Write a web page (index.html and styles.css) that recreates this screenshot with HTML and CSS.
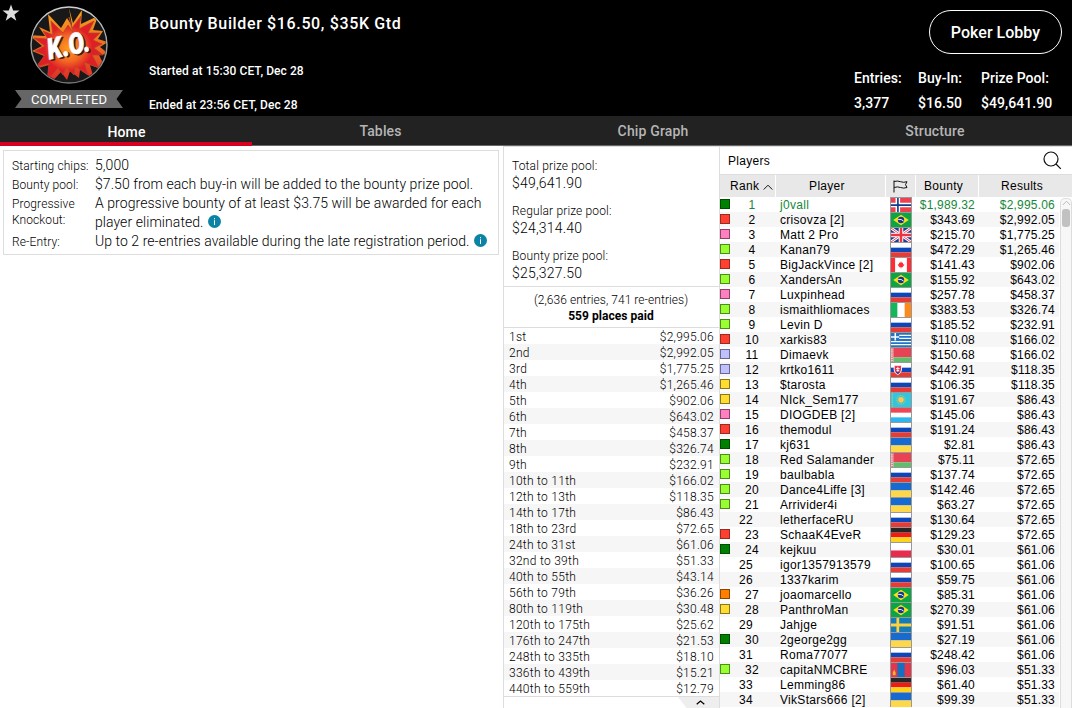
FILE: index.html
```html
<!DOCTYPE html>
<html lang="en">
<head>
<meta charset="utf-8">
<title>Bounty Builder $16.50, $35K Gtd</title>
<link rel="stylesheet" href="styles.css">
</head>
<body>
<svg class="defs" width="0" height="0">
  <symbol id="norway" viewBox="0 0 22 15"><path fill="#ef4050" d="M0 0h22v15H0z"/><path fill="#fff" d="M5 0h5v15H5zM0 5h22v5H0z"/><path fill="#0b3d91" d="M6.700 0h1.800v15H6.700zM0 6.600h22v1.900H0z"/></symbol>
  <symbol id="brazil" viewBox="0 0 22 15"><path fill="#0aa644" d="M0 0h22v15H0z"/><path fill="#ffdc1e" d="M11 2l8.500 5.500L11 13 2.500 7.500z"/><circle cx="11" cy="7.500" r="3.500" fill="#123a8c"/><path d="M7.800 6.800q4-.5 6.200 2" fill="none" stroke="#fff"/></symbol>
  <symbol id="uk" viewBox="0 0 22 15"><path fill="#1c3f94" d="M0 0h22v15H0z"/><path d="M0 0l22 15M22 0L0 15" stroke="#fff" stroke-width="3"/><path d="M0 0l22 15M22 0L0 15" stroke="#e8344c"/><path fill="#fff" d="M8.500 0h5v15h-5zM0 5h22v5H0z"/><path fill="#ef3340" d="M9.600 0h2.800v15H9.600zM0 6.200h22v2.600H0z"/></symbol>
  <symbol id="russia" viewBox="0 0 22 15"><path fill="#fff" d="M0 0h22v5H0z"/><path fill="#0b47b8" d="M0 5h22v5H0z"/><path fill="#e73b35" d="M0 10h22v5H0z"/></symbol>
  <symbol id="canada" viewBox="0 0 22 15"><path fill="#fff" d="M0 0h22v15H0z"/><path fill="#ff2c35" d="M0 0h4.500v15H0zM17.500 0H22v15h-4.500zM11 3.500l1 1.800 1.200-.4v2l1.400-.6-.3 1.500-1.600 2.100h-1.400v1.400h-.6V9.900H9.300L7.700 7.800l-.3-1.500 1.400.6v-2l1.200.4z"/></symbol>
  <symbol id="ireland" viewBox="0 0 22 15"><path fill="#fff" d="M0 0h22v15H0z"/><path fill="#10b85a" d="M0 0h7v15H0z"/><path fill="#ff8a1c" d="M15 0h7v15h-7z"/></symbol>
  <symbol id="greece" viewBox="0 0 22 15"><path fill="#2274c4" d="M0 0h22v15H0z"/><path d="M9 2.500h13M9 5.800h13M0 9.200h22M0 12.500h22" stroke="#fff" stroke-width="1.300"/><path d="M4.700 0v8M0 4.300h9" stroke="#fff" stroke-width="1.700"/></symbol>
  <symbol id="belarus" viewBox="0 0 22 15"><path fill="#e74354" d="M0 0h22v10H0z"/><path fill="#5fbd6c" d="M0 10h22v5H0z"/><path fill="#f4d7da" d="M0 0h2.600v15H0z"/><path d="M1.200 0v15" stroke="#e74354" stroke-width="1.200" stroke-dasharray="1.500 .8"/></symbol>
  <symbol id="slovakia" viewBox="0 0 22 15"><use href="#russia"/><path fill="#e9304a" stroke="#fff" d="M3.500 2.500h8v5q0 3-4 5-4-2-4-5z"/><path d="M7.500 4v6M5.500 6h4M6 8h3" stroke="#fff"/><path d="M5.500 10.500q2-2 4 0l-2 1.200z" fill="#1747a8"/></symbol>
  <symbol id="kazakhstan" viewBox="0 0 22 15"><path fill="#32c5df" d="M0 0h22v15H0z"/><circle cx="11" cy="7.300" r="4.500" fill="none" stroke="#c3c56c" stroke-width="1.200" stroke-dasharray="1 .8"/><circle cx="11" cy="7.300" r="3" fill="#ffc84b"/><path d="M1.500 0v15" stroke="#a6c87a" stroke-width="1.300" stroke-dasharray="1.500 .8"/></symbol>
  <symbol id="luxembourg" viewBox="0 0 22 15"><path fill="#fff" d="M0 0h22v15H0z"/><path fill="#f04555" d="M0 0h22v5H0z"/><path fill="#2eb7ee" d="M0 10h22v5H0z"/></symbol>
  <symbol id="ukraine" viewBox="0 0 22 15"><path fill="#176bd0" d="M0 0h22v8H0z"/><path fill="#ffd84a" d="M0 8h22v7H0z"/></symbol>
  <symbol id="germany" viewBox="0 0 22 15"><path fill="#262626" d="M0 0h22v5H0z"/><path fill="#f21a14" d="M0 5h22v5H0z"/><path fill="#ffd21c" d="M0 10h22v5H0z"/></symbol>
  <symbol id="poland" viewBox="0 0 22 15"><path fill="#fff" d="M0 0h22v8H0z"/><path fill="#ea2b50" d="M0 8h22v7H0z"/></symbol>
  <symbol id="sweden" viewBox="0 0 22 15"><path fill="#147cbd" d="M0 0h22v15H0z"/><path fill="#ffd13c" d="M6 0h3v15H6zM0 6h22v3H0z"/></symbol>
  <symbol id="mongolia" viewBox="0 0 22 15"><path fill="#e3364c" d="M0 0h22v15H0z"/><path fill="#176fc0" d="M7 0h8v15H7z"/><path fill="#ffb62c" d="M3.500 7l1 2.500H5V13H2V9.500h.5z"/></symbol>
</svg>

<header class="top">
  <svg class="star" viewBox="0 0 18 18"><path d="M9 .5l2.200 6h6.300l-5.100 3.900 1.900 6.300L9 12.900l-5.300 3.800 1.900-6.300L.5 6.500h6.300z"/></svg>
  <div class="badge">
    <svg class="ko" viewBox="0 0 78 78">
      <defs>
        <radialGradient id="fire"><stop offset="0" stop-color="#ff9c1c"/><stop offset=".4" stop-color="#f26724"/><stop offset=".7" stop-color="#df1f26"/><stop offset="1" stop-color="#dc2026"/></radialGradient>
        <linearGradient id="rim" x2="0" y2="1"><stop offset="0" stop-color="#d0d0d0"/><stop offset="1" stop-color="#777"/></linearGradient>
        <linearGradient id="edge" x2="0" y2="1"><stop offset="0" stop-color="#f7a41c"/><stop offset=".5" stop-color="#ee6a22"/><stop offset="1" stop-color="#dd2226"/></linearGradient>
        <clipPath id="disc"><circle cx="39" cy="39" r="37"/></clipPath>
      </defs>
      <circle cx="39" cy="39" r="38" fill="#181818"/>
      <g clip-path="url(#disc)">
        <path fill="url(#edge)" d="M39 2l4 15 9-13-1 14 17-8-5 14 10 1-5 8 10 3-8 5 9 7-10 1 8 16-17-6 4 14-14-9-1 8-9-7-3 9-6-8-13 14 1-21-14 4 9-13-12-5 10-5-13-11 16 1-6-9 11 5-2-18 13 14 6-10 5 8z"/>
        <path fill="url(#fire)" stroke="#b0452c" stroke-width=".7" d="M39 11l3 11 9-12-2 13 15-8-6 12 12 0-7 7 9 4-8 4 9 7-11 0 7 13-15-6 4 13-13-9-1 9-8-8-3 8-5-7-11 13 2-18-13 4 9-12-10-4 10-5-11-8 14 1-5-8 10 4-2-14 12 12 5-8 5 7z"/>
      </g>
      <circle cx="39" cy="39" r="38" fill="none" stroke="url(#rim)" stroke-width="1.400"/>
      <g class="ko-text" transform="rotate(-12 40 45)">
        <text x="19.500" y="50.500" textLength="43" lengthAdjust="spacingAndGlyphs" fill="#3b1a12" stroke="#3b1a12">K.O.</text>
        <text x="18" y="49" textLength="43" lengthAdjust="spacingAndGlyphs" fill="#fff" stroke="#fff">K.O.</text>
      </g>
    </svg>
    <div class="ribbon">COMPLETED</div>
  </div>
  <div class="info">
    <h1>Bounty Builder $16.50, $35K Gtd</h1>
    <p class="started">Started at 15:30 CET, Dec 28</p>
    <p class="ended">Ended at 23:56 CET, Dec 28</p>
  </div>
  <div class="summary">
    <button class="lobby">Poker Lobby</button>
    <div class="stats">
      <div class="stat-entries"><span>Entries:</span><span>3,377</span></div>
      <div class="stat-buyin"><span>Buy-In:</span><span>$16.50</span></div>
      <div class="stat-pool"><span>Prize Pool:</span><span>$49,641.90</span></div>
    </div>
  </div>
</header>

<nav class="tabs">
  <a class="tab active">Home</a><a class="tab">Tables</a><a class="tab">Chip Graph</a><a class="tab">Structure</a>
</nav>

<main class="content">
  <section class="details">
    <dl class="rules">
      <dt>Starting chips:</dt><dd>5,000</dd>
      <dt>Bounty pool:</dt><dd>$7.50 from each buy-in will be added to the bounty prize pool.</dd>
      <dt class="two">Progressive<br>Knockout:</dt><dd>A progressive bounty of at least $3.75 will be awarded for each<br>player eliminated. <svg class="i" viewBox="0 0 13 13"><circle cx="6.500" cy="6.500" r="6.500"/><path d="M6 3h1v1.200H6zM6 5.300h1V10H6z"/></svg></dd>
      <dt>Re-Entry:</dt><dd>Up to 2 re-entries available during the late registration period. <svg class="i" viewBox="0 0 13 13"><circle cx="6.500" cy="6.500" r="6.500"/><path d="M6 3h1v1.200H6zM6 5.300h1V10H6z"/></svg></dd>
    </dl>
  </section>

  <section class="prizes">
    <div class="pools">
      <div><span>Total prize pool:</span><b>$49,641.90</b></div>
      <div><span>Regular prize pool:</span><b>$24,314.40</b></div>
      <div><span>Bounty prize pool:</span><b>$25,327.50</b></div>
    </div>
    <div class="paid"><span>(2,636 entries, 741 re-entries)</span><strong>559 places paid</strong></div>
    <div class="payouts" id="payouts"></div>
    <div class="foot"><div class="expand"><svg viewBox="0 0 9 5"><path d="M.7 4.300L4.500 1l3.800 3.300"/></svg></div></div>
  </section>

  <section class="players">
    <div class="players-bar"><span>Players</span><svg class="search" viewBox="0 0 19 19"><circle cx="8" cy="8" r="7"/><path d="M13 13l4.800 4.800"/></svg></div>
    <div class="cols head">
      <div class="h-rank">Rank <svg viewBox="0 0 10 6"><path d="M.7 5.500L5 1.200l4.300 4.300"/></svg></div>
      <div class="h-player">Player</div>
      <div class="h-flag"><svg viewBox="0 0 15 13"><path d="M1 .5v12M1 1.500q3.500-1 6.500.2t6.500 0l-1.500 3L14 7.500q-3.500 1.200-6.500 0T1 7.500"/></svg></div>
      <div class="h-bounty">Bounty</div>
      <div class="h-results">Results</div>
    </div>
    <div class="list">
      <div class="rows" id="rows"></div>
      <div class="scroll"><svg viewBox="0 0 9 6"><path d="M.8 5L4.500 1.200 8.200 5"/></svg><div class="thumb"></div></div>
    </div>
  </section>
</main>
<script src="app.js"></script>
</body>
</html>
```
FILE: styles.css
```css
* { box-sizing: border-box; }
body { margin: 0; width: 1072px; height: 708px; overflow: hidden; background: #fff; color: #000; font-family: Roboto, "Liberation Sans", sans-serif; white-space: nowrap; }
.defs { position: absolute; }
h1, p, dl, dd { margin: 0; }

.top { display: flex; height: 116px; background: #000; color: #fff; font-weight: 500; }
.star { width: 18px; height: 18px; margin: 4px 0 0 2px; fill: #ddd; flex: none; }
.badge { width: 108px; margin: 6px 0 0 -5px; display: flex; flex-direction: column; align-items: center; }
.ko { width: 78px; height: 78px; margin-right: 1px; }
.ko-text { font: 900 29px Roboto, sans-serif; font-style: italic; stroke-width: .6px; }
.ribbon { width: 108px; height: 18px; margin-top: 6px; background: #666; clip-path: polygon(0 0, 100% 0, 94% 50%, 100% 100%, 0 100%, 6% 50%); text-align: center; font-size: 13px; line-height: 19px; font-weight: 400; letter-spacing: .1px; }
.info { margin-left: 26px; flex: 1; }
h1 { margin-top: 13px; font-size: 16px; line-height: 22px; font-weight: 500; letter-spacing: .64px; }
.info p { font-size: 12px; line-height: 16px; letter-spacing: .07px; }
.started { margin-top: 28px; }
.ended { margin-top: 18px; }
.summary { width: 218px; }
.lobby { display: block; width: 133px; height: 44px; margin: 10px 0 0 75px; padding: 0; border: 1px solid #fff; border-radius: 22px; background: #000; color: #fff; font: 500 16px Roboto, sans-serif; letter-spacing: .02px; }
.stats { display: flex; margin-top: 14px; font-size: 14px; letter-spacing: .05px; }
.stats span { display: block; line-height: 20px; margin-bottom: 5px; }
.stat-entries { width: 64px; }
.stat-buyin { width: 63px; }

.tabs { display: grid; grid-template-columns: 252px 256px 289px 275px; height: 30px; background: #222; border-bottom: 1px solid #666; }
.tab { height: 29px; line-height: 30px; padding-left: 1px; text-align: center; color: #b5b5b5; font-weight: 500; font-size: 14px; letter-spacing: .15px; }
.tab.active { height: 30px; line-height: 32px; color: #fff; border-bottom: 4px solid #d70022; }

.content { display: flex; height: 562px; }
.details { width: 503px; padding: 4px 0 0 3px; font-weight: 300; }
.rules { width: 496px; height: 105px; border: 1px solid #ddd; padding: 5px 8px; display: grid; grid-template-columns: 83px 1fr; grid-template-rows: 19px 19px 38px 19px; }
dt { font-size: 12px; line-height: 20px; letter-spacing: .1px; }
dt.two { line-height: 16px; padding-top: 2px; }
dd { font-size: 14px; line-height: 19px; letter-spacing: .06px; }
.i { width: 13px; height: 13px; vertical-align: -1px; fill: #0b83a5; margin-left: 1px; }
.i path { fill: #fff; }

.prizes { width: 217px; border: 1px solid #ddd; border-bottom: 0; font-weight: 300; display: flex; flex-direction: column; }
.pools { height: 140px; padding: 10px 0 0 8px; border-bottom: 1px solid #ddd; }
.pools div { height: 45px; }
.pools span { display: block; font-size: 12px; line-height: 18px; letter-spacing: .15px; }
.pools b { display: block; font-size: 14px; font-weight: 300; line-height: 17px; letter-spacing: .2px; }
.paid { height: 41px; border-bottom: 1px solid #ddd; padding-top: 5px; text-align: center; font-size: 12px; letter-spacing: .05px; padding-right: 1px; }
.paid span, .paid strong { display: block; line-height: 16px; }
.paid strong { font-weight: 700; }
.payout { display: flex; justify-content: space-between; height: 16px; padding: 0 5px; font-size: 12px; line-height: 18px; letter-spacing: .28px; }
.payout:nth-child(even) { background: #f6f6f6; }
.foot { border-top: 1px solid #ddd; display: flex; justify-content: flex-end; flex: 1; }
.expand { width: 41px; background: #eee; clip-path: polygon(0 0, 100% 0, 100% 100%, 21% 100%); padding-left: 18px; }
.expand svg { width: 9px; height: 5px; display: block; margin-top: 3px; fill: none; stroke: #000; stroke-width: 1.2; }

.players { width: 352px; border-top: 1px solid #ddd; font-family: "Liberation Sans", Arial, sans-serif; font-size: 12px; letter-spacing: .3px; display: flex; flex-direction: column; }
.players-bar { height: 28px; display: flex; align-items: center; justify-content: space-between; padding: 0 10px 0 8px; border-bottom: 1px solid #ddd; flex: none; }
.search { width: 19px; height: 19px; fill: none; stroke: #111; stroke-width: 1.2; }
.cols { display: grid; grid-template-columns: 55px 110px 30px 63px 94px; }
.head { height: 22px; background: #e8e8e8; line-height: 22px; flex: none; text-align: center; }
.head > div + div { border-left: 1px solid #fff; }
.head svg { fill: none; stroke: #111; }
.h-rank { padding-left: 8px; }
.h-rank svg { width: 10px; height: 6px; }
.h-player { padding-right: 7px; }
.h-flag svg { width: 15px; height: 13px; vertical-align: -3px; }
.h-bounty { padding-right: 7px; }
.h-results { padding-right: 7px; }
.list { display: flex; flex: 1; min-height: 0; }
.rows { width: 339px; overflow: hidden; }
.row { display: grid; grid-template-columns: 10px 50px 110px 22px 63px 80px; height: 15px; line-height: 16px; }
.row:nth-child(even) { background: #f6f6f6; }
.row:first-child { color: #16883a; }
.swatch { width: 10px; height: 10px; margin-top: 2px; border: 1px solid; }
.row .rank { text-align: center; padding-right: 6px; }
.row .rank.plain { padding-right: 18px; }
.money { text-align: right; letter-spacing: .2px; }
.flag { width: 22px; height: 15px; display: block; border: 1px solid #999; border-width: 1px 1px 0; }
.green { background: #008000; border-color: #004d00; }
.red { background: #ff4030; border-color: #992a22; }
.pink { background: #ff80c0; border-color: #904068; }
.lime { background: #99ff33; border-color: #4e8c18; }
.lilac { background: #c0c0ff; border-color: #686890; }
.gold { background: #ffdc30; border-color: #8b761a; }
.orange { background: #ff8000; border-color: #8b4600; }
.scroll { width: 12px; margin-left: 1px; border: 1px solid #ddd; border-bottom: 0; border-radius: 5px 5px 0 0; background: #f7f7f7; margin-top: 1px; display: flex; flex-direction: column; align-items: center; }
.scroll svg { width: 9px; height: 6px; margin-top: 1px; fill: none; stroke: #bbb; flex: none; }
.thumb { width: 8px; height: 18px; margin-top: 3px; border-radius: 3px; background: #c1c1c1; flex: none; }
```
FILE: app.js
```js
const payouts = `1st|2,995.06
2nd|2,992.05
3rd|1,775.25
4th|1,265.46
5th|902.06
6th|643.02
7th|458.37
8th|326.74
9th|232.91
10th to 11th|166.02
12th to 13th|118.35
14th to 17th|86.43
18th to 23rd|72.65
24th to 31st|61.06
32nd to 39th|51.33
40th to 55th|43.14
56th to 79th|36.26
80th to 119th|30.48
120th to 175th|25.62
176th to 247th|21.53
248th to 335th|18.10
336th to 439th|15.21
440th to 559th|12.79`;

// swatch | player | flag | bounty | result
const players = `green|j0vall|norway|1,989.32|2,995.06
red|crisovza [2]|brazil|343.69|2,992.05
pink|Matt 2 Pro|uk|215.70|1,775.25
lime|Kanan79|russia|472.29|1,265.46
red|BigJackVince [2]|canada|141.43|902.06
lime|XandersAn|brazil|155.92|643.02
pink|Luxpinhead|russia|257.78|458.37
lime|ismaithliomaces|ireland|383.53|326.74
lime|Levin D|russia|185.52|232.91
red|xarkis83|greece|110.08|166.02
lilac|Dimaevk|belarus|150.68|166.02
lilac|krtko1611|slovakia|442.91|118.35
gold|$tarosta|russia|106.35|118.35
gold|NIck_Sem177|kazakhstan|191.67|86.43
pink|DIOGDEB [2]|luxembourg|145.06|86.43
red|themodul|russia|191.24|86.43
green|kj631|ukraine|2.81|86.43
lime|Red Salamander|belarus|75.11|72.65
lime|baulbabla|russia|137.74|72.65
lime|Dance4Liffe [3]|ukraine|142.46|72.65
lime|Arrivider4i|ukraine|63.27|72.65
|letherfaceRU|russia|130.64|72.65
red|SchaaK4EveR|germany|129.23|72.65
green|kejkuu|poland|30.01|61.06
|igor1357913579|russia|100.65|61.06
|1337karim|russia|59.75|61.06
orange|joaomarcello|brazil|85.31|61.06
gold|PanthroMan|brazil|270.39|61.06
|Jahjge|sweden|91.51|61.06
green|2george2gg|ukraine|27.19|61.06
|Roma77077|russia|248.42|61.06
lime|capitaNMCBRE|mongolia|96.03|51.33
|Lemming86|germany|61.40|51.33
|VikStars666 [2]|ukraine|99.39|51.33`;

document.getElementById('payouts').innerHTML = payouts.split('\n').map(line => {
  const [place, prize] = line.split('|');
  return `<div class="payout"><span>${place}</span><span>$${prize}</span></div>`;
}).join('');

document.getElementById('rows').innerHTML = players.split('\n').map((line, i) => {
  const [color, name, flag, bounty, result] = line.split('|');
  return `<div class="row"><div>${color ? `<div class="swatch ${color}"></div>` : ''}</div>` +
    `<div class="rank${color ? '' : ' plain'}">${i + 1}</div><div>${name}</div>` +
    `<svg class="flag" viewBox="0 0 22 15" preserveAspectRatio="none"><use href="#${flag}"/></svg>` +
    `<div class="money">$${bounty}</div><div class="money">$${result}</div></div>`;
}).join('');
```
